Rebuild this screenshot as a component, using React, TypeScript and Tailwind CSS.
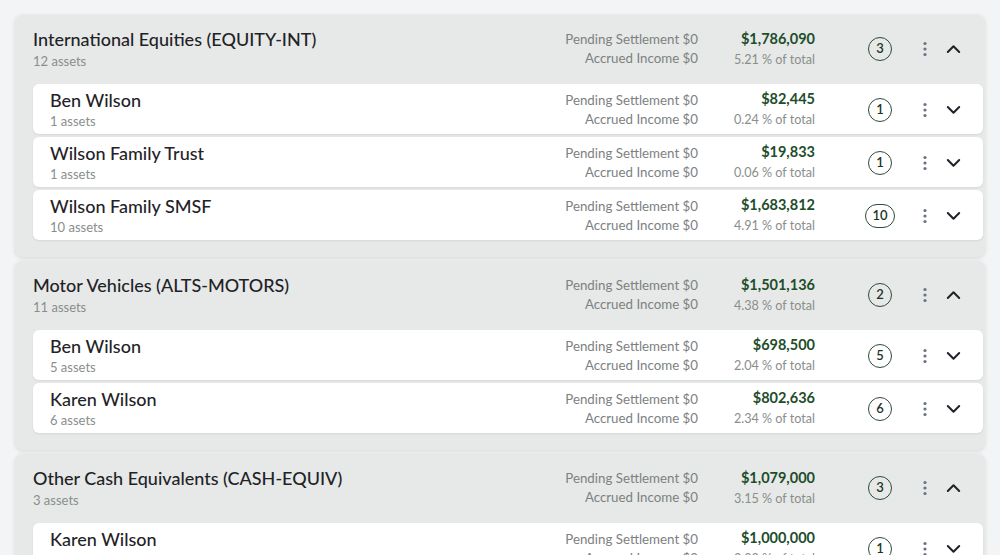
import React from "react";

type Sub = { name: string; assets: number; amount: string; pct: string; count: number };
type Group = { title: string; assets: number; amount: string; pct: string; count: number; subs: Sub[] };

const groups: Group[] = [
  {
    title: "International Equities (EQUITY-INT)",
    assets: 12,
    amount: "$1,786,090",
    pct: "5.21 % of total",
    count: 3,
    subs: [
      { name: "Ben Wilson", assets: 1, amount: "$82,445", pct: "0.24 % of total", count: 1 },
      { name: "Wilson Family Trust", assets: 1, amount: "$19,833", pct: "0.06 % of total", count: 1 },
      { name: "Wilson Family SMSF", assets: 10, amount: "$1,683,812", pct: "4.91 % of total", count: 10 },
    ],
  },
  {
    title: "Motor Vehicles (ALTS-MOTORS)",
    assets: 11,
    amount: "$1,501,136",
    pct: "4.38 % of total",
    count: 2,
    subs: [
      { name: "Ben Wilson", assets: 5, amount: "$698,500", pct: "2.04 % of total", count: 5 },
      { name: "Karen Wilson", assets: 6, amount: "$802,636", pct: "2.34 % of total", count: 6 },
    ],
  },
  {
    title: "Other Cash Equivalents (CASH-EQUIV)",
    assets: 3,
    amount: "$1,079,000",
    pct: "3.15 % of total",
    count: 3,
    subs: [
      { name: "Karen Wilson", assets: 1, amount: "$1,000,000", pct: "2.92 % of total", count: 1 },
    ],
  },
];

const font = { fontFamily: "Lato, 'Noto Sans', sans-serif" };

function Kebab() {
  return (
    <svg width="6" height="16" viewBox="0 0 6 16" className="text-[#6b7280]">
      <circle cx="3" cy="2.5" r="1.6" fill="currentColor" />
      <circle cx="3" cy="8" r="1.6" fill="currentColor" />
      <circle cx="3" cy="13.5" r="1.6" fill="currentColor" />
    </svg>
  );
}

function Chevron({ up }: { up?: boolean }) {
  return (
    <svg width="15" height="10" viewBox="0 0 15 10" className="text-[#1f2328]">
      <path
        d={up ? "M1.8 8 L7.5 2.3 L13.2 8" : "M1.8 2 L7.5 7.7 L13.2 2"}
        fill="none"
        stroke="currentColor"
        strokeWidth="2"
        strokeLinecap="round"
        strokeLinejoin="round"
      />
    </svg>
  );
}

function Right({ amount, pct, count, up }: { amount: string; pct: string; count: number; up?: boolean }) {
  return (
    <div className="flex items-center">
      <div className="flex w-[160px] flex-col items-end text-[13.3px] leading-[19px] text-[#7d817f]">
        <span>Pending Settlement $0</span>
        <span>Accrued Income $0</span>
      </div>
      <div className="ml-[17px] flex w-[100px] flex-col items-end">
        <span className="text-[14.5px] font-bold leading-[20px] text-[#1e4d2b]">{amount}</span>
        <span className="text-[12.6px] leading-[21px] text-[#8a8e8c]">{pct}</span>
      </div>
      <div className="ml-[40px] flex w-[50px] justify-center">
        <span
          className={`flex h-[24px] items-center justify-center rounded-full border border-[#2f4a3c] text-[13px] font-semibold text-[#1d3427] ${
            count >= 10 ? "w-[30px]" : "w-[24px]"
          }`}
        >
          {count}
        </span>
      </div>
      <div className="ml-[8px] flex w-[24px] justify-center">
        <Kebab />
      </div>
      <div className="ml-[4px] flex w-[24px] justify-center">
        <Chevron up={up} />
      </div>
    </div>
  );
}

export default function App() {
  return (
    <div className="min-h-screen bg-[#f3f4f5] px-[15px] pt-[15px]" style={font}>
      <div className="flex flex-col gap-[4px]">
        {groups.map((g) => (
          <div
            key={g.title}
            className="rounded-[8px] bg-[#e6e9e7] pb-[17px] pl-[18px] pr-[2px] shadow-[0_1px_4px_rgba(0,0,0,0.12)]"
          >
            <div className="flex h-[69px] items-center justify-between pr-[18px]">
              <div className="flex flex-col pt-[1px]">
                <span className="text-[18px] font-medium leading-[22px] text-[#1f2328]">{g.title}</span>
                <span className="text-[13px] leading-[22px] text-[#8a8e8c]">{g.assets} assets</span>
              </div>
              <div className="pb-[1px]">
                <Right amount={g.amount} pct={g.pct} count={g.count} up />
              </div>
            </div>
            <div className="flex flex-col gap-[3px]">
              {g.subs.map((s) => (
                <div
                  key={s.name}
                  className="flex h-[50px] items-center justify-between rounded-[6px] bg-white pl-[17px] pr-[18px] shadow-[0_1px_2px_rgba(0,0,0,0.08)]"
                >
                  <div className="flex flex-col pt-[1px]">
                    <span className="text-[18px] font-medium leading-[22px] text-[#1f2328]">{s.name}</span>
                    <span className="text-[13px] leading-[20px] text-[#8a8e8c]">{s.assets} assets</span>
                  </div>
                  <div className="pt-[1px]">
                    <Right amount={s.amount} pct={s.pct} count={s.count} />
                  </div>
                </div>
              ))}
            </div>
          </div>
        ))}
      </div>
    </div>
  );
}
